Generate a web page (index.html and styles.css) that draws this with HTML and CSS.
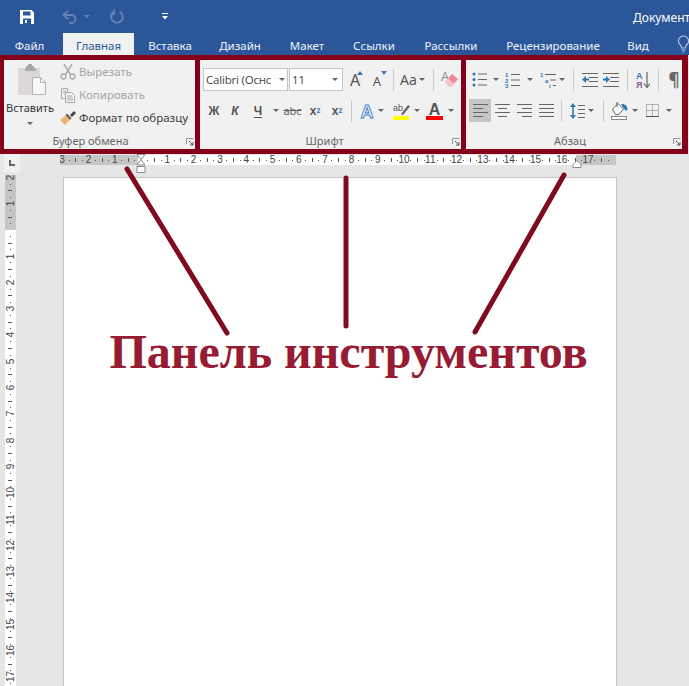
FILE: index.html
```html
<!DOCTYPE html>
<html lang="ru">
<head>
<meta charset="utf-8">
<title>Документ1 - Word</title>
<link rel="stylesheet" href="styles.css">
</head>
<body>
<div class="app">
  <header class="titlebar">
    <span class="qat w16 ml19"><svg width="16" height="16" viewBox="0 0 16 16"><path d="M1 1h11.5L15 3.500V15H1z" fill="#fff"/><rect x="4" y="2.500" width="7.500" height="4" fill="#2b579a"/><rect x="4" y="9.500" width="8" height="5.500" fill="#2b579a"/><rect x="6" y="11" width="2" height="3" fill="#fff"/></svg></span>
    <span class="qat w16 ml27"><svg width="16" height="14" viewBox="0 0 16 14"><path d="M6 1L1.500 5 6 9M2 5h7.500a4 4 0 0 1 0 8H7" fill="none" stroke="#6485b5" stroke-width="1.800"/></svg></span>
    <span class="car car-dim w10 ml4"></span>
    <span class="qat w16 ml17"><svg width="15" height="15" viewBox="0 0 15 15"><path d="M9.500 2.600A5.800 5.800 0 1 1 4 2.800M4.200 .5v4.600H.5" fill="none" stroke="#6485b5" stroke-width="1.900"/></svg></span>
    <span class="qat w10 ml35"><svg width="6" height="7" viewBox="0 0 6 7"><path d="M0 0h6v1H0z" fill="#fff"/><path d="M0 3h6L3 6.500z" fill="#fff"/></svg></span>
    <span class="doc-title">Документ1 - Word</span>
  </header>

  <nav class="tabs">
    <span class="tab tab-file">Файл</span>
    <span class="tab tab-on">Главная</span>
    <span class="tab">Вставка</span>
    <span class="tab">Дизайн</span>
    <span class="tab">Макет</span>
    <span class="tab">Ссылки</span>
    <span class="tab">Рассылки</span>
    <span class="tab">Рецензирование</span>
    <span class="tab">Вид</span>
    <span class="bulb"><svg width="11" height="18" viewBox="0 0 11 18"><path d="M5.500 1A5 5 0 0 0 2.500 10c.8.700 1 1.500 1 3h4c0-1.500.2-2.300 1-3a5 5 0 0 0-3-9zM3.500 15h4M4.500 17h2" fill="none" stroke="#b3c6e0" stroke-width="1.200"/></svg></span>
  </nav>

  <section class="ribbon">
    <div class="grp g1">
      <div class="g1-body">
        <div class="paste">
          <svg class="paste-ic" width="30" height="31" viewBox="0 0 30 31"><rect x="1" y="4" width="22" height="27" fill="#dcd8d8"/><path d="M9 4V2h2V0h4v2h2v2h2v3H8V4z" fill="#a8a8a8"/><path d="M15.500 13.500h8l5 5v12h-13z" fill="#f7f7f9" stroke="#b5b5b5"/><path d="M23.500 13.500v5h5" fill="none" stroke="#b5b5b5"/></svg>
          <span class="paste-t">Вставить</span>
          <span class="car paste-c"></span>
        </div>
        <div class="clip">
          <div class="clip-row off"><svg width="16" height="16" viewBox="0 0 16 16"><path d="M4 0l6 10M12 0L6 10" stroke="#aaa" stroke-width="1.500" fill="none"/><circle cx="3.500" cy="12.500" r="2.500" fill="none" stroke="#aaa" stroke-width="1.300"/><circle cx="12.500" cy="12.500" r="2.500" fill="none" stroke="#aaa" stroke-width="1.300"/></svg><span>Вырезать</span></div>
          <div class="clip-row off"><svg width="16" height="16" viewBox="0 0 16 16"><path d="M1.500 1.500h6v10h-6z" fill="#f1f1f1" stroke="#aaa"/><path d="M5.500 5.500h6l3 3v7h-9z" fill="#f6f6f6" stroke="#aaa"/><path d="M3 4h3M3 6h2M7 9h5M7 11h6M7 13h6" stroke="#aaa"/></svg><span>Копировать</span></div>
          <div class="clip-row"><svg width="16" height="16" viewBox="0 0 16 16"><path d="M0 10l6-5 4 5-5 5z" fill="#e8b772"/><path d="M5.500 5l1.500-1.500 4.500 4.500L10 10z" fill="#666"/><path d="M10 5l4-4 2 2-4 4z" fill="#444"/></svg><span>Формат по образцу</span></div>
        </div>
      </div>
      <div class="lbl">Буфер обмена<svg class="launch" width="8" height="8" viewBox="0 0 8 8"><path d="M.5 6V.5H7.500" fill="none" stroke="#999"/><path d="M3 3l4 4M7 4v3H4" fill="none" stroke="#555"/></svg></div>
    </div>

    <div class="grp g2">
      <div class="rows">
        <div class="row ml3">
          <div class="combo cb-font"><span class="cb-t">Calibri (Оснс</span><span class="car w10"></span></div>
          <div class="combo cb-size"><span class="cb-t">11</span><span class="car w14"></span></div>
          <span class="sp w3"></span>
          <span class="ic w20"><span class="a-big">A</span><svg class="tri" width="6" height="4" viewBox="0 0 6 4"><path d="M0 4l3-4 3 4z" fill="#3a78bd"/></svg></span>
          <span class="ic w24"><span class="a-sm">A</span><svg class="tri" width="6" height="4" viewBox="0 0 6 4"><path d="M0 0l3 4 3-4z" fill="#3a78bd"/></svg></span>
          <span class="sep"></span>
          <span class="ic w33"><span class="aa">Aa</span><span class="car w10"></span></span>
          <span class="sep"></span>
          <span class="ic w24"><svg width="17" height="17" viewBox="0 0 17 17"><text x="0" y="10" class="svgt" font-size="12" fill="#888">A</text><path d="M4 11l7-8 6 5-7 8z" fill="#ee8a96"/><path d="M4 11l3-3.500 6 5L10 16H8z" fill="#f7c3ca"/></svg></span>
        </div>
        <div class="row ml4">
          <span class="ic w20 fb">Ж</span>
          <span class="ic w22 fb fi">К</span>
          <span class="ic w24 fb fu">Ч</span>
          <span class="car w11"></span>
          <span class="ic w23 fabc">abc</span>
          <span class="ic w22 fb">x<sub>2</sub></span>
          <span class="ic w22 fb">x<sup>2</sup></span>
          <span class="sep"></span>
          <span class="sp w3"></span>
          <span class="ic w18"><svg width="18" height="18" viewBox="0 0 18 18"><text x="9" y="15.500" text-anchor="middle" class="svgt" font-size="18" font-weight="700" fill="#eaf2fb" stroke="#3f7fc4" stroke-width=".9">A</text></svg></span>
          <span class="car w10"></span>
          <span class="sp w6"></span>
          <span class="ic w18"><svg width="17" height="18" viewBox="0 0 17 18"><text x="0" y="9" class="svgt" font-size="9" fill="#555">ab</text><path d="M8 12L15 3l2 1.500L10 13z" fill="#666"/><rect x="0" y="14" width="16" height="4" fill="#ff0"/></svg></span>
          <span class="car w14"></span>
          <span class="ic w20"><svg width="17" height="18" viewBox="0 0 17 18"><text x="8.500" y="13" text-anchor="middle" class="svgt" font-size="16" font-weight="700" fill="#555">A</text><rect x="0" y="14" width="17" height="4" fill="#f00"/></svg></span>
          <span class="car w14"></span>
        </div>
      </div>
      <div class="lbl">Шрифт<svg class="launch" width="8" height="8" viewBox="0 0 8 8"><path d="M.5 6V.5H7.500" fill="none" stroke="#999"/><path d="M3 3l4 4M7 4v3H4" fill="none" stroke="#555"/></svg></div>
    </div>

    <div class="grp g3">
      <div class="rows">
        <div class="row ml3">
          <span class="ic w20"><svg width="15" height="15" viewBox="0 0 15 15"><circle cx="2" cy="2" r="1.500" fill="#2f75bb"/><circle cx="2" cy="7.500" r="1.500" fill="#2f75bb"/><circle cx="2" cy="13" r="1.500" fill="#2f75bb"/><path d="M6 2h9M6 7.500h9M6 13h9" stroke="#666"/></svg></span>
          <span class="car w14"></span>
          <span class="ic w18"><svg width="15" height="16" viewBox="0 0 15 16"><text x="0" y="5" class="svgn">1</text><text x="0" y="10.500" class="svgn">2</text><text x="0" y="16" class="svgn">3</text><path d="M6 2.500h9M6 8h9M6 13.500h9" stroke="#666"/></svg></span>
          <span class="car w18"></span>
          <span class="ic w20"><svg width="18" height="16" viewBox="0 0 18 16"><text x="0" y="5" class="svgn">1</text><text x="5" y="10.500" class="svgn">a</text><text x="9" y="16" class="svgn">i</text><path d="M5 2.500h11M10 8h6M13 13.500h3" stroke="#666"/></svg></span>
          <span class="car w6"></span>
          <span class="sp w5"></span>
          <span class="sep"></span>
          <span class="ic w26"><svg width="16" height="14" viewBox="0 0 16 14"><path d="M0 .5h16M7 4.500h9M7 8.500h9M0 13.500h16" stroke="#666"/><path d="M0 6.500l4-3.500v2.500h3v2H4V10z" fill="#2f75bb"/></svg></span>
          <span class="ic w16"><svg width="16" height="14" viewBox="0 0 16 14"><path d="M0 .5h16M7 4.500h9M7 8.500h9M0 13.500h16" stroke="#666"/><path d="M7 6.500L3 3v2.500H0v2h3V10z" fill="#2f75bb"/></svg></span>
          <span class="sp w5"></span>
          <span class="sep"></span>
          <span class="ic w24"><svg width="14" height="18" viewBox="0 0 14 18"><text x="0" y="8" class="svgt" font-size="9" font-weight="700" fill="#2f75bb">А</text><text x="0" y="17" class="svgt" font-size="9" font-weight="700" fill="#8a5aa8">Я</text><path d="M11 1v15M8 12.500l3 4 3-4" fill="none" stroke="#666" stroke-width="1.200"/></svg></span>
          <span class="sep"></span>
          <span class="sp w4"></span>
          <span class="ic w16 pil">¶</span>
        </div>
        <div class="row ml3">
          <span class="ic w22 on"><svg width="15" height="13" viewBox="0 0 15 13"><path d="M0 .5h15M0 4.500h10M0 8.500h15M0 12.500h10" stroke="#666"/></svg></span>
          <span class="ic w22"><svg width="15" height="13" viewBox="0 0 15 13"><path d="M0 .5h15M3 4.500h9M0 8.500h15M3 12.500h9" stroke="#666"/></svg></span>
          <span class="ic w22"><svg width="15" height="13" viewBox="0 0 15 13"><path d="M0 .5h15M5 4.500h10M0 8.500h15M5 12.500h10" stroke="#666"/></svg></span>
          <span class="ic w22"><svg width="15" height="13" viewBox="0 0 15 13"><path d="M0 .5h15M0 4.500h15M0 8.500h15M0 12.500h15" stroke="#666"/></svg></span>
          <span class="sp w1"></span>
          <span class="sep"></span>
          <span class="sp w2"></span>
          <span class="ic w20"><svg width="15" height="16" viewBox="0 0 15 16"><path d="M3 2v12" stroke="#2f75bb" stroke-width="1.500"/><path d="M0 4l3-4 3 4zM0 12l3 4 3-4z" fill="#2f75bb"/><path d="M8 2.500h7M8 6.500h7M8 10.500h7M8 14.500h7" stroke="#666"/></svg></span>
          <span class="car w8"></span>
          <span class="sp w5"></span>
          <span class="sep"></span>
          <span class="ic w24"><svg width="17" height="18" viewBox="0 0 17 18"><path d="M1.500 7L7 1.500 12.500 7 8 12.500H4.500z" fill="#fff" stroke="#666"/><path d="M6 0v5" stroke="#666"/><path d="M10 2c4-.5 6.500 2 6.500 5.500L15 9l-3-3.500z" fill="#2f75bb"/><rect x=".5" y="14.500" width="15" height="3" fill="#fff" stroke="#888"/></svg></span>
          <span class="car w8"></span>
          <span class="ic w26"><svg width="13" height="13" viewBox="0 0 13 13"><path d="M.5 .5h12v12H.5zM6.500 .5v12M.5 6.500h12" fill="none" stroke="#777" stroke-dasharray="1 1"/><path d="M0 12.500h13" stroke="#555"/></svg></span>
          <span class="car w8"></span>
        </div>
      </div>
      <div class="lbl">Абзац<svg class="launch" width="8" height="8" viewBox="0 0 8 8"><path d="M.5 6V.5H7.500" fill="none" stroke="#999"/><path d="M3 3l4 4M7 4v3H4" fill="none" stroke="#555"/></svg></div>
    </div>
  </section>

  <main class="work">
    <div class="corner"><i class="corner-l"></i></div>
    <div class="hwrap">
      <div class="hruler">
        <span class="hc">3</span><span class="hc">2</span><span class="hc">1</span><span class="hc"></span><span class="hc">1</span><span class="hc">2</span><span class="hc">3</span><span class="hc">4</span><span class="hc">5</span><span class="hc">6</span><span class="hc">7</span><span class="hc">8</span><span class="hc">9</span><span class="hc">10</span><span class="hc">11</span><span class="hc">12</span><span class="hc">13</span><span class="hc">14</span><span class="hc">15</span><span class="hc">16</span><span class="hc">17</span><span class="hc"></span>
      </div>
      <svg class="mark-l" width="10" height="19" viewBox="0 0 10 19"><path d="M1 .5h8L5 5.500zM5 5.500L9 11H1z" fill="#fff" stroke="#8c8c8c"/><rect x="1" y="12.500" width="8" height="6" fill="#fff" stroke="#8c8c8c"/></svg>
      <svg class="mark-r" width="10" height="8" viewBox="0 0 10 8"><path d="M5 .5l4 4v3H1v-3z" fill="#fff" stroke="#8c8c8c"/></svg>
    </div>
    <div class="vruler">
      <span class="vc"><b>2</b></span><span class="vc"><b>1</b></span><span class="vc"></span><span class="vc"><b>1</b></span><span class="vc"><b>2</b></span><span class="vc"><b>3</b></span><span class="vc"><b>4</b></span><span class="vc"><b>5</b></span><span class="vc"><b>6</b></span><span class="vc"><b>7</b></span><span class="vc"><b>8</b></span><span class="vc"><b>9</b></span><span class="vc"><b>10</b></span><span class="vc"><b>11</b></span><span class="vc"><b>12</b></span><span class="vc"><b>13</b></span><span class="vc"><b>14</b></span><span class="vc"><b>15</b></span><span class="vc"><b>16</b></span><span class="vc"><b>17</b></span>
    </div>
    <div class="page">
      <h1 class="headline">Панель инструментов</h1>
    </div>
  </main>

  <svg class="arrows" width="689" height="686" viewBox="0 0 689 686">
    <path d="M127 169L227 333M346 178V326M564 175L475 332" fill="none" stroke="#800a1e" stroke-width="5" stroke-linecap="round"/>
  </svg>
</div>
</body>
</html>
```

FILE: styles.css
```css
* { box-sizing: border-box; }
html, body { margin: 0; padding: 0; }
body { font-family: "Noto Sans", "Liberation Sans", sans-serif; font-size: 11.5px; color: #444; background: #e6e6e6; }
.app { position: relative; width: 689px; height: 686px; overflow: hidden; display: flex; flex-direction: column; }

/* title bar */
.titlebar { height: 33px; background: #2b579a; display: flex; align-items: center; color: #fff; white-space: nowrap; flex: none; overflow: hidden; }
.qat { display: flex; align-items: center; justify-content: center; flex: none; }
.ml19 { margin-left: 19px; }
.ml27 { margin-left: 27px; }
.ml17 { margin-left: 17px; }
.ml35 { margin-left: 35px; }
.ml4 { margin-left: 4px; }
.ml3 { margin-left: 3px; }
.doc-title { margin-left: 463px; font-size: 12px; margin-top: 2px; flex: none; }

/* tabs */
.tabs { height: 22px; background: #2b579a; display: grid; grid-template-columns: 63px 71px 72px 68px 66px 68px 86px 118px 52px 1fr; color: #f2f5fa; flex: none; }
.tab { display: flex; align-items: center; justify-content: center; font-size: 11.5px; padding-top: 2px; }
.tab-file { padding-right: 4px; }
.tab-on { background: #f1f1f1; color: #2b579a; }
.bulb { padding: 2px 0 0 14px; overflow: hidden; }

/* ribbon */
.ribbon { height: 99px; background: #85001a; padding: 5px 5px 5px 4px; margin-right: 1px; display: flex; gap: 5px; flex: none; }
.grp { background: #f1f1f1; display: flex; flex-direction: column; position: relative; }
.g1 { width: 191px; }
.g2 { width: 261px; }
.g3 { width: 216px; }
.g1 .lbl { padding-right: 18px; }
.g2 .lbl { padding-right: 12px; }
.g3 .lbl { padding-right: 8px; }
.g1-body { flex: 1; display: flex; min-height: 0; }
.rows { flex: 1; display: flex; flex-direction: column; gap: 8px; padding-top: 8px; }
.row { height: 23px; display: flex; align-items: center; }
.lbl { height: 17px; padding-bottom: 1px; flex: none; display: flex; align-items: center; justify-content: center; font-size: 11px; color: #666; position: relative; }
.launch { position: absolute; right: 1px; bottom: 3px; }

/* clipboard group */
.paste { width: 52px; display: flex; flex-direction: column; align-items: center; padding-top: 4px; }
.paste-ic { margin-left: 4px; }
.paste-t { margin-top: 5px; font-size: 11px; color: #333; line-height: 16px; }
.paste-c { width: 10px; height: 10px; margin-top: 2px; }
.clip { padding: 0 0 0 4px; display: flex; flex-direction: column; }
.clip-row { height: 23px; display: flex; align-items: center; gap: 3px; color: #3c3c3c; white-space: nowrap; font-size: 11.5px; }
.off { color: #a6a6a6; }

/* font & paragraph controls */
.combo { height: 23px; background: #fff; border: 1px solid #c6c6c6; display: flex; align-items: center; overflow: hidden; flex: none; }
.cb-font { width: 85px; margin-right: 1px; }
.cb-size { width: 54px; }
.cb-t { flex: 1; min-width: 0; white-space: nowrap; padding-left: 2px; font-size: 11.5px; color: #444; font-family: "Open Sans", "Noto Sans", sans-serif; letter-spacing: -.2px; }
.ic { height: 23px; display: flex; align-items: center; justify-content: center; flex: none; position: relative; }
.on { background: #c6c6c6; }
.sp { flex: none; height: 1px; }
.sep { width: 1px; height: 22px; background: #c9c9c9; margin: 0 3px; flex: none; }
.car { flex: none; height: 10px; display: flex; align-items: center; justify-content: center; overflow: visible; }
.car::after { content: ""; flex: none; border-left: 3px solid transparent; border-right: 3px solid transparent; border-top: 3px solid #666; }
.car-dim::after { border-top-color: #6485b5; }

.w1 { width: 1px; } .w2 { width: 2px; } .w3 { width: 3px; } .w4 { width: 4px; } .w5 { width: 5px; } .w6 { width: 6px; }
.w8 { width: 8px; } .w10 { width: 10px; } .w11 { width: 11px; } .w14 { width: 14px; } .w16 { width: 16px; } .w18 { width: 18px; }
.w20 { width: 20px; } .w22 { width: 22px; } .w23 { width: 23px; } .w24 { width: 24px; } .w26 { width: 26px; } .w33 { width: 33px; }

.a-big { font-size: 16px; color: #555; margin-right: 2px; }
.a-sm { font-size: 13px; color: #555; margin-right: 2px; margin-top: 2px; }
.tri { position: absolute; right: 3px; top: 3px; }
.aa { font-size: 14px; color: #555; }
.fb { font-family: "Liberation Sans", sans-serif; font-weight: 700; font-size: 12px; color: #555; }
.fi { font-style: italic; }
.fu { text-decoration: underline; text-underline-offset: 2px; }
.fabc { font-size: 11px; color: #666; text-decoration: line-through; }
sub, sup { font-size: 7px; color: #2f75bb; line-height: 0; }
.pil { font-size: 17px; color: #666; font-weight: 700; }
.svgt { font-family: "Liberation Sans", sans-serif; }
.svgn { font-family: "Liberation Sans", sans-serif; font-size: 6px; font-weight: 700; fill: #2f75bb; }

/* document area */
.work { flex: 1; min-height: 0; display: grid; grid-template-columns: 60px 1fr; grid-template-rows: 21px 1fr; background: #e6e6e6; }
.corner { width: 16px; height: 18px; margin-left: 4px; background: #f1f1f1; display: flex; align-items: center; justify-content: center; }
.corner-l { width: 6px; height: 6px; border-left: 2px solid #666; border-bottom: 2px solid #666; }
.hwrap { position: relative; padding-top: 1px; }
.hruler { width: 556px; height: 10px; display: flex; overflow: hidden; background: linear-gradient(to right, #c6c6c6 78px, #fff 78px, #fff 516px, #c6c6c6 516px); }
.hc { flex: none; width: 26.3px; height: 10px; font-size: 10px; line-height: 10px; text-align: center; color: #444; font-family: "Liberation Sans", sans-serif; background-image: linear-gradient(#555, #555), linear-gradient(#555, #555), linear-gradient(#555, #555); background-repeat: no-repeat; background-size: 1px 4px, 1px 1px, 1px 1px; background-position: 0 3px, 6.500px 5px, 19.500px 5px; }
.hc:first-child { margin-left: -11px; }
.mark-l { position: absolute; left: 76px; top: 0; }
.mark-r { position: absolute; left: 512px; top: 6px; }

.vruler { width: 11px; margin-left: 5px; display: flex; flex-direction: column; overflow: hidden; background: linear-gradient(to bottom, #c6c6c6 55px, #fff 55px); }
.vc { flex: none; width: 11px; height: 26.3px; display: flex; align-items: center; justify-content: center; background-image: linear-gradient(#555, #555), linear-gradient(#555, #555), linear-gradient(#555, #555); background-repeat: no-repeat; background-size: 4px 1px, 1px 1px, 1px 1px; background-position: 3px 0, 5px 6.500px, 5px 19.500px; }
.vc:first-child { margin-top: -11px; }
.vc b { font-weight: 400; font-size: 10px; line-height: 11px; color: #444; transform: rotate(-90deg); font-family: "Liberation Sans", sans-serif; white-space: nowrap; }

.page { width: 554px; margin: 2px 0 0 3px; background: #fff; border: 1px solid #c6c6c6; border-bottom: 0; padding: 144px 0 0 17px; }
.headline { margin: 0; font-family: "Liberation Serif", serif; font-weight: 700; font-size: 48px; line-height: 60px; color: #971b33; text-align: center; white-space: nowrap; }

.arrows { position: absolute; left: 0; top: 0; pointer-events: none; }
```
